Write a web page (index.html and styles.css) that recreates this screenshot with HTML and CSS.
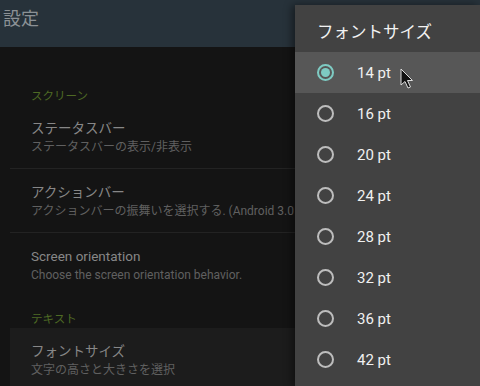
FILE: index.html
```html
<!DOCTYPE html>
<html lang="ja">
<head>
<meta charset="utf-8">
<link rel="stylesheet" href="styles.css">
</head>
<body>
<div class="screen">
  <header class="toolbar"><span class="toolbar-title">設定</span></header>
  <main class="prefs">
    <div class="category category-first">スクリーン</div>
    <div class="pref">
      <div class="pref-title">ステータスバー</div>
      <div class="pref-summary">ステータスバーの表示/非表示</div>
    </div>
    <div class="divider"></div>
    <div class="pref">
      <div class="pref-title">アクションバー</div>
      <div class="pref-summary">アクションバーの振舞いを選択する. (Android 3.0 以降)</div>
    </div>
    <div class="divider"></div>
    <div class="pref">
      <div class="pref-title">Screen orientation</div>
      <div class="pref-summary">Choose the screen orientation behavior.</div>
    </div>
    <div class="category">テキスト</div>
    <div class="pref pref-pressed">
      <div class="pref-title">フォントサイズ</div>
      <div class="pref-summary">文字の高さと大きさを選択</div>
    </div>
  </main>

  <div class="dialog">
    <div class="dialog-title">フォントサイズ</div>
    <ul class="options">
      <li class="option option-selected"><span class="radio radio-on"></span><span class="option-label">14 pt</span></li>
      <li class="option"><span class="radio"></span><span class="option-label">16 pt</span></li>
      <li class="option"><span class="radio"></span><span class="option-label">20 pt</span></li>
      <li class="option"><span class="radio"></span><span class="option-label">24 pt</span></li>
      <li class="option"><span class="radio"></span><span class="option-label">28 pt</span></li>
      <li class="option"><span class="radio"></span><span class="option-label">32 pt</span></li>
      <li class="option"><span class="radio"></span><span class="option-label">36 pt</span></li>
      <li class="option"><span class="radio"></span><span class="option-label">42 pt</span></li>
    </ul>
  </div>

  <svg class="cursor" width="14" height="22" viewBox="0 0 14 22">
    <path d="M1 1 L1 17 L5 13.5 L8 20 L10.5 19 L7.5 12.5 L12.5 12.5 Z" fill="#111" stroke="#ddd" stroke-width="1" stroke-linejoin="round"/>
  </svg>
</div>
</body>
</html>
```

FILE: styles.css
```css
* { box-sizing: border-box; margin: 0; padding: 0; }

html, body {
  width: 480px;
  height: 386px;
  overflow: hidden;
  background: #141414;
  font-family: "Roboto", "Noto Sans CJK JP", sans-serif;
}

.screen {
  position: relative;
  width: 480px;
  height: 386px;
  overflow: hidden;
}

.toolbar {
  height: 47px;
  background: #27323a;
  padding: 7px 0 0 3px;
}

.toolbar-title {
  font-size: 18px;
  line-height: 24px;
  color: #8b9195;
}

.prefs {
  display: flex;
  flex-direction: column;
}

.category {
  padding: 14px 0 0 31px;
  font-size: 11.5px;
  line-height: 18px;
  color: #4e6a24;
}

.category-first {
  padding-top: 40px;
}

.pref {
  margin-left: 10px;
  padding: 13px 0 12px 21px;
  white-space: nowrap;
}

.pref-pressed {
  background: #1c1c1c;
  height: 80px;
}

.pref-title {
  font-size: 13.5px;
  line-height: 20px;
  color: #878787;
}

.pref-summary {
  font-size: 12px;
  line-height: 18px;
  color: #606060;
}

.divider {
  margin-left: 10px;
  height: 1px;
  background: #232323;
}

.dialog {
  position: absolute;
  left: 295px;
  top: 5px;
  width: 185px;
  height: 381px;
  background: #424242;
  box-shadow: -3px 0 8px rgba(0, 0, 0, 0.45);
}

.dialog-title {
  height: 47px;
  padding: 16px 0 0 22px;
  font-size: 16.5px;
  line-height: 24px;
  color: #f2f2f2;
}

.options {
  list-style: none;
}

.option {
  height: 41px;
  display: flex;
  align-items: center;
  padding-left: 22px;
}

.option-selected {
  background: #575757;
}

.radio {
  width: 17px;
  height: 17px;
  border: 2px solid #bdbdbd;
  border-radius: 50%;
  display: flex;
  align-items: center;
  justify-content: center;
}

.radio-on {
  border-color: #7ecbc3;
}

.radio-on::after {
  content: "";
  width: 9px;
  height: 9px;
  border-radius: 50%;
  background: #7ecbc3;
}

.option-label {
  margin-left: 23px;
  font-size: 15px;
  color: #f0f0f0;
}

.cursor {
  position: absolute;
  left: 400px;
  top: 68px;
}
```
